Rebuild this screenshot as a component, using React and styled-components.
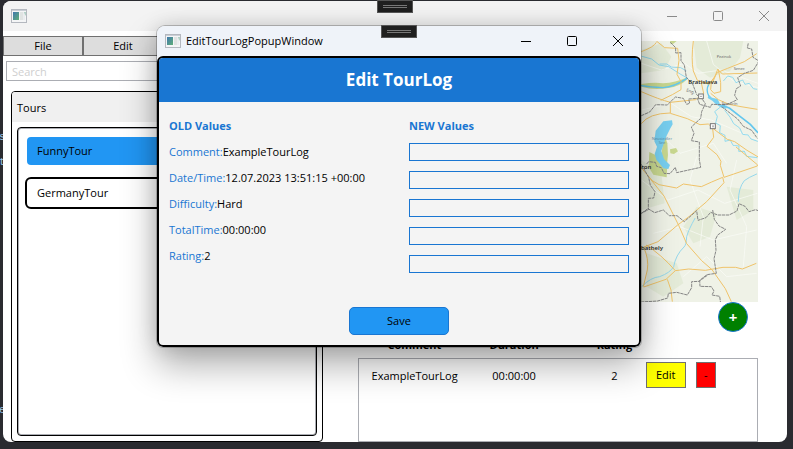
import React from "react";
import styled, { createGlobalStyle, css } from "styled-components";

const GlobalStyle = createGlobalStyle`
  *, *::before, *::after { box-sizing: border-box; }
  body { margin: 0; background: #2a2b30; }
  body, button, input, table {
    font-family: "Open Sans", "Noto Sans", sans-serif;
    font-size: 11px;
    line-height: 16px;
    color: #000;
  }
  button { padding: 0; cursor: pointer; }
`;

const Desktop = styled.div`
  position: relative;
  display: flex;
  min-height: 100vh;
  padding: 1px 6px 7px 3px;
  background: #2a2b30;
`;

const CodeGutter = styled.div`
  position: absolute;
  inset: 0 auto 0 0;
  width: 5px;
  overflow: hidden;
  font-family: "Liberation Mono", monospace;
  color: #9cc4e4;
`;

const CodeChar = styled.span`
  position: absolute;
  left: -1px;
  top: ${(p) => p.$top}px;
`;

const AppWindow = styled.main`
  position: relative;
  flex: 1;
  display: flex;
  flex-direction: column;
  min-width: 0;
  overflow: hidden;
  border-radius: 8px;
  background: #fff;
`;

const TitleBar = styled.header`
  display: flex;
  align-items: center;
  gap: 5px;
  height: 30px;
  padding-left: 8px;
  background: ${(p) => (p.$active ? "#eff3f9" : "#f3f3f3")};
`;

const WindowTitle = styled.h2`
  flex: 1;
  margin: 0;
  font-size: 11px;
  font-weight: 400;
`;

const Controls = styled.div`
  display: flex;
`;

const ControlButton = styled.button`
  display: grid;
  place-items: center;
  width: 46px;
  height: 30px;
  border: 0;
  background: none;
  color: ${(p) => (p.$active ? "#000" : "#8a8a8a")};
`;

const Columns = styled.div`
  flex: 1;
  display: grid;
  grid-template-columns: minmax(0, 325fr) minmax(0, 459fr);
`;

const Sidebar = styled.div`
  display: flex;
  flex-direction: column;
  padding-top: 5px;
`;

const MenuBar = styled.nav`
  display: flex;
`;

const MenuButton = styled.button`
  width: 80px;
  height: 20px;
  border: 1px solid #707070;
  background: #ddd;
`;

const SearchBox = styled.input`
  height: 20px;
  margin: 5px 3px 10px;
  padding: 0 5px;
  border: 1px solid #abadb3;
  background: #fff;
  &::placeholder { color: #cfcfcf; opacity: 1; }
`;

const ToursPanel = styled.section`
  flex: 1;
  display: flex;
  flex-direction: column;
  margin: 0 5px 0 8px;
  border: 1px solid #000;
  border-radius: 4px;
  overflow: hidden;
`;

const ToursHeading = styled.h3`
  margin: 0;
  padding: 8px 5px 6px;
  font-size: 11px;
  font-weight: 400;
  background: #f0f0f0;
`;

const TourList = styled.ul`
  flex: 1;
  display: flex;
  flex-direction: column;
  gap: 10px;
  margin: 5px;
  padding: 7px;
  list-style: none;
  border: 1px solid #000;
  border-radius: 4px;
  box-shadow: inset 0 0 0 1px #abadb3;
`;

const TourButton = styled.button`
  display: block;
  width: 100%;
  height: 32px;
  padding: 0 10px;
  text-align: left;
  border: 2px solid #000;
  border-radius: 6px;
  background: #fff;
  ${(p) =>
    p.$selected &&
    css`
      border-color: transparent;
      background: #2196f3 padding-box;
    `}
`;

const Details = styled.div`
  display: flex;
  flex-direction: column;
  padding: 10px 29px 0 30px;
`;

const MapFrame = styled.div`
  height: 261px;
  overflow: hidden;
  display: flex;
  justify-content: flex-end;
  background: #eef1e6;
`;

const AddButton = styled.button`
  align-self: flex-end;
  width: 30px;
  height: 30px;
  margin-right: 10px;
  border: 1px solid #1976d2;
  border-radius: 50%;
  background: #008000;
  color: #fff;
  font-size: 15px;
  font-weight: 700;
`;

const LogTable = styled.table`
  width: 100%;
  table-layout: fixed;
  border-collapse: collapse;
  thead tr { height: 26px; }
  tbody { border: 1px solid #abadb3; }
`;

const LogCell = styled.td`
  height: 83px;
  padding: ${(p) => (p.$actions ? "3px 0 0" : "9px 0 0")};
  padding-left: ${(p) => (p.$inset ? 25 : 0)}px;
  vertical-align: top;
  text-align: center;
`;

const LogHead = styled.th`
  width: ${(p) => p.$width};
  padding: 1px 0 0 ${(p) => (p.$inset ? 25 : 0)}px;
  font-weight: 700;
`;

const Actions = styled.div`
  display: flex;
  gap: 10px;
`;

const ActionButton = styled.button`
  width: ${(p) => (p.$danger ? 20 : 40)}px;
  height: 26px;
  border: 1px solid #707070;
  background: ${(p) => (p.$danger ? "#f00" : "#ff0")};
`;

const DialogLayer = styled.div`
  position: absolute;
  inset: 26px 0 auto 5px;
  display: flex;
  justify-content: center;
`;

const Dialog = styled.section`
  width: 484px;
  max-width: 100%;
  overflow: hidden;
  border-radius: 8px 8px 6px 6px;
  background: #eff3f9;
  box-shadow: 0 0 0 1px rgba(0, 0, 0, 0.22), 0 0 20px rgba(0, 0, 0, 0.14),
    0 18px 36px rgba(0, 0, 0, 0.32);
`;

const DialogBody = styled.form`
  display: flex;
  flex-direction: column;
  border: 2px solid #000;
  border-radius: 6px;
  overflow: hidden;
  background: #f4f4f4;
`;

const DialogHeading = styled.h1`
  margin: 0;
  padding: 10px;
  font-size: 17px;
  line-height: 24px;
  text-align: center;
  color: #fff;
  background: #1976d2;
`;

const ValueColumns = styled.div`
  display: grid;
  grid-template-columns: 1fr 1fr;
`;

const ValueColumn = styled.div`
  padding: 16px 10px 0;
`;

const ColumnTitle = styled.h3`
  margin: 0;
  font-size: 11px;
  line-height: 16px;
  color: #1976d2;
`;

const FieldStack = styled.div`
  display: flex;
  flex-direction: column;
  gap: 10px;
  padding-top: ${(p) => p.$top}px;
`;

const OldValue = styled.div`
  span { color: #1976d2; }
`;

const NewValue = styled.input`
  width: 100%;
  height: 18px;
  padding: 0 4px;
  border: 1px solid #1976d2;
  border-radius: 0;
  background: #f4f4f4;
`;

const SaveButton = styled.button`
  align-self: center;
  width: 100px;
  height: 28px;
  margin: 34px 0 10px;
  border: 1px solid #1976d2;
  border-radius: 5px;
  background: #2196f3;
`;

const DebugGrip = styled.div`
  position: absolute;
  left: 50%;
  top: ${(p) => p.$top}px;
  width: 36px;
  height: 13px;
  padding: 4px 5px;
  margin-left: ${(p) => p.$shift}px;
  border: 1px solid #555;
  background: #1f1f1f;
  &::before {
    content: "";
    display: block;
    height: 3px;
    border: solid #777;
    border-width: 1px 0;
  }
`;

function WindowIcon() {
  return (
    <svg width="16" height="14" viewBox="0 0 16 14" aria-hidden="true">
      <defs>
        <linearGradient id="screen" x1="0" y1="0" x2="1" y2="1">
          <stop offset="0" stopColor="#3f78ae" />
          <stop offset="1" stopColor="#5fae78" />
        </linearGradient>
      </defs>
      <rect x="0.5" y="0.5" width="15" height="13" fill="#f4f5f6" stroke="#b4b8bf" />
      <path d="M1 1.5h14" stroke="#c9ced6" />
      <rect x="2" y="3" width="6" height="8" fill="url(#screen)" />
      <rect x="9" y="3" width="3" height="8" fill="#dfe3e2" />
      <path d="M13 3h1.500v4z" fill="#6fae95" />
      <path d="M13 3v8" stroke="#e0e4e8" />
    </svg>
  );
}

function WindowControls({ active }) {
  return (
    <Controls>
      <ControlButton type="button" $active={active} aria-label="Minimize">
        <svg width="10" height="10" viewBox="0 0 10 10" stroke="currentColor"><path d="M0 5.5h10" /></svg>
      </ControlButton>
      <ControlButton type="button" $active={active} aria-label="Maximize">
        <svg width="10" height="10" viewBox="0 0 10 10" fill="none" stroke="currentColor"><rect x="0.5" y="0.5" width="9" height="9" rx="1" /></svg>
      </ControlButton>
      <ControlButton type="button" $active={active} aria-label="Close">
        <svg width="10" height="10" viewBox="0 0 10 10" stroke="currentColor"><path d="M0 0l10 10M10 0L0 10" /></svg>
      </ControlButton>
    </Controls>
  );
}

function TourMap() {
  return (
    <svg width="160" height="261" viewBox="-96 123 480 783" role="img" aria-label="Tour map" fontFamily="Noto Sans, sans-serif">
      <rect x="-96" y="123" width="480" height="783" fill="#eff2e7" />
      <g fill="#e4ebd8">
        <path d="M190 123h150l-10 50-30 40-60 20-40-30z" />
        <path d="M34 150l60-20 30 40-20 40-70 10z" />
        <path d="M200 620l60 20-20 70-50 20-30-50z" />
        <path d="M50 760l90 30 20 60-60 40-50-30z" />
        <path d="M290 560l80 10v60l-50 30z" />
        <path d="M34 480l60 40 10 90-70 20z" />
      </g>
      <g fill="none" stroke="#fbfcf7" strokeWidth="2">
        <path d="M34 190l60 20 70-20 40 30 70-10 110 40M230 123l20 70 60 50 74 20M34 330l90-20 60 40 60 10 140 60M90 400l60 60 100-30 40 60M34 540l80 60 90-30 80 40 98-30M70 700l80-20 100 40 130-30M160 830l70-60 60 60 90-10M200 470l-20 70 40 110-10 90M320 480l-20 90 50 110-10 120" />
      </g>
      <g fill="#c8d78f">
        <path d="M34 252q40-6 65-2 38-3 70-17l3 5q-22 22-58 26-42 8-80-4z" />
        <path d="M103 404l9 26 2 34-4 36-20 0 6-50z" />
        <path d="M120 448l18-4 6 10-12 8-11-2zM120 123h20l-10 8-8 2z" />
        <path d="M58 456l20 10 34 26-2 40-40-8-14-22z" />
      </g>
      <g fill="#78cff0">
        <path d="M100 364l26-3 2 12-8 14-10 20-8 22-8 24 8 24 18 18-5 12-15-2-12-15-9-11-5-17 7-22-8-16 4-32z" />
        <path d="M236 284l10 9 17 4 8 17 14 1 4 12-15-4-17-11-10-10-14-8z" />
      </g>
      <g fill="none" stroke="#64c7ee" strokeLinecap="round">
        <path d="M34 257q25 4 65 6 35-3 72-28" strokeWidth="4" />
        <path d="M277 316l22 9 31 24 31 24 22 24" strokeWidth="5" />
        <path d="M236 287q-9-17 0-33l-6-10" strokeWidth="4" />
        <path d="M36 169l29 8 22 18 29 5 36 23 20 11M90 192l20 0 14 9 28 2 16 9" strokeWidth="2" />
        <g stroke="#91daee" strokeWidth="3" strokeDasharray="7 2">
          <path d="M270 322l-16 13 8 14-5 20 14 8-2 21 16 8 0 18 16-4 8 16 18 2-1 16 17 0 7 15 31 4M281 242l12-14 15 4 10 16 20-8 7 13 13-3 12 16 11 2M285 332l15 19 11 20 18 13 9 19 16 2 9 12 20 7" />
        </g>
        <path d="M380 522q-24 10-37 20-18 22-18 62M195 655q-19 33-25 55-1 25-8 31-25 24-31 59-10 18-42 30-27 2-53 29" stroke="#95d7eb" strokeWidth="3" />
      </g>
      <g fill="none" stroke="#efc36a" strokeWidth="3" strokeLinejoin="round">
        <path d="M190 123q-7 55 0 90l12 28 36 12 25-36 30-12 50-20 37-24" />
        <path d="M34 155q38-14 45-28M79 123l25 20 39 2 4 36-6 42 12 22 0 24-26 15-35 17" />
        <path d="M34 275q55 24 87 32l76-8 24-19-7-31M121 309v31l51 16 38 18 25-2 20 18 37 28 22 7 37 26 52 31" />
        <path d="M214 248l34 0 15-40 14 14 105-3M265 208l7 40 0 27-20 5-10-11 2-25 12-14M242 280l23 19 32 14 36 7 49 8" />
        <path d="M247 378l4 34-20 27 30 25 12 20-2 12 11 36 100-34 0-4-64-53" />
        <path d="M34 371q23-31 86-32M34 504l33 38 20 12 53 10 20-12 54 8 31-14 33-14 4 16-52 57-52 44-35 26-59 50-50 19" />
        <path d="M54 528l48 60 44 88 24 55 45 51 31 27 40 57 18 39M48 735q45 28 88 77l40-5 50 4 53-9 38 0 20 5 42-17M136 812l-28 26-67 23M41 742q16 34 11 68l-12 50M112 838l11 32 4 35" />
      </g>
      <g fill="none" stroke="#858585" strokeWidth="3" strokeDasharray="10 2">
        <path d="M121 127l16 16 0 16 16-1 0 24 10 13 6 37 19 20 12 32 18 15 8 12-11 24-3 20-28 26 8 19-8 22 24 4 0 53 4 23-72 16-4-16-16 19-18-1-8-17-14-4-4-12-20-2-6 7" />
        <path d="M34 347l25-11 18-22 35 1 24-24 24 4 10 18 9-3-3-13 26-2 7 18 32 9 4-9 45 1 32-15-8-13 5-20 13-8-9-25 20-13 27-9 17-28-18-11-4-25-13-3 3-15M275 320l48 37 17 22 25 12 17 24" />
        <path d="M34 493l22 39 5 24 14 19-4 19-16 1 0 34-21 11M34 640l20-14 20 12 26-8 18 17 23 0 22 18 37-33 4 29 24-8 14-16 21 8 34 0 24-12 6-22 18 8 12 16 20-6 10 4M248 630l5 28 14 20 20 10-24 17-7 14 2 32-6 25 7 44-28 4-22 17 1 18 34 1 8 13-6 12 23 4 3 22-12 14M232 826l-25 18-22 1 0 18-13 22-32-8-25 3-2 14-30 9-49 3" />
      </g>
      <g fill="#fff" stroke="#777" strokeWidth="3">
        <rect x="206" y="282" width="14" height="14" /><rect x="241" y="371" width="15" height="15" />
        <path d="M211 289h4M249 376v6" />
      </g>
      <g fill="#30322f" fontWeight="600">
        <text x="175" y="252" fontSize="18">Bratislava</text>
        <text x="64" y="506" fontSize="18" textAnchor="end">Sopron</text>
        <text x="99" y="749" fontSize="18" textAnchor="end">Szombathely</text>
      </g>
      <g fill="#666" fontSize="12">
        <text x="260" y="174">Pezinok</text><text x="311" y="211">Senec</text>
        <text x="168" y="274" transform="rotate(18 168 274)" fontSize="13">Eng.</text>
        <text x="275" y="316">Šamorín</text>
        <g fill="#5c91ae"><text x="65" y="419">Neusiedler</text><text x="86" y="433">See</text></g>
      </g>
    </svg>
  );
}

const tours = ["FunnyTour", "GermanyTour"];

const fields = [
  ["Comment", "ExampleTourLog"],
  ["Date/Time", "12.07.2023 13:51:15 +00:00"],
  ["Difficulty", "Hard"],
  ["TotalTime", "00:00:00"],
  ["Rating", "2"],
];

export default function App() {
  return (
    <Desktop>
      <GlobalStyle />
      <CodeGutter aria-hidden="true">
        <CodeChar $top={129}>s</CodeChar>
        <CodeChar $top={154}>t</CodeChar>
        <CodeChar $top={402}>e</CodeChar>
      </CodeGutter>
      <AppWindow>
        <TitleBar>
          <WindowIcon />
          <WindowTitle />
          <WindowControls />
        </TitleBar>
        <Columns>
          <Sidebar>
            <MenuBar>
              <MenuButton type="button">File</MenuButton>
              <MenuButton type="button">Edit</MenuButton>
            </MenuBar>
            <SearchBox type="text" placeholder="Search" aria-label="Search" />
            <ToursPanel>
              <ToursHeading>Tours</ToursHeading>
              <TourList>
                {tours.map((name, i) => (
                  <li key={name}>
                    <TourButton type="button" $selected={i === 0}>{name}</TourButton>
                  </li>
                ))}
              </TourList>
            </ToursPanel>
          </Sidebar>
          <Details>
            <MapFrame><TourMap /></MapFrame>
            <AddButton type="button" aria-label="Add tour log">+</AddButton>
            <LogTable>
              <thead>
                <tr>
                  <LogHead $width="28%">Comment</LogHead>
                  <LogHead $width="22%">Duration</LogHead>
                  <LogHead $width="22%" $inset>Rating</LogHead>
                  <LogHead $width="28%" aria-label="Actions" />
                </tr>
              </thead>
              <tbody>
                <tr>
                  <LogCell>ExampleTourLog</LogCell>
                  <LogCell>00:00:00</LogCell>
                  <LogCell $inset>2</LogCell>
                  <LogCell $actions>
                    <Actions>
                      <ActionButton type="button">Edit</ActionButton>
                      <ActionButton type="button" $danger aria-label="Delete">-</ActionButton>
                    </Actions>
                  </LogCell>
                </tr>
              </tbody>
            </LogTable>
          </Details>
        </Columns>
      </AppWindow>
      <DebugGrip $top={0} $shift={-20} />
      <DialogLayer>
        <Dialog role="dialog" aria-label="EditTourLogPopupWindow">
          <TitleBar $active>
            <WindowIcon />
            <WindowTitle>EditTourLogPopupWindow</WindowTitle>
            <WindowControls active />
          </TitleBar>
          <DialogBody onSubmit={(e) => e.preventDefault()}>
            <DialogHeading>Edit TourLog</DialogHeading>
            <ValueColumns>
              <ValueColumn>
                <ColumnTitle>OLD Values</ColumnTitle>
                <FieldStack $top={10}>
                  {fields.map(([label, value]) => (
                    <OldValue key={label}><span>{label}:</span>{value}</OldValue>
                  ))}
                </FieldStack>
              </ValueColumn>
              <ValueColumn>
                <ColumnTitle>NEW Values</ColumnTitle>
                <FieldStack $top={9}>
                  {fields.map(([label]) => (
                    <NewValue key={label} type="text" aria-label={`New ${label}`} />
                  ))}
                </FieldStack>
              </ValueColumn>
            </ValueColumns>
            <SaveButton type="submit">Save</SaveButton>
          </DialogBody>
        </Dialog>
      </DialogLayer>
      <DebugGrip $top={25} $shift={-16} />
    </Desktop>
  );
}
